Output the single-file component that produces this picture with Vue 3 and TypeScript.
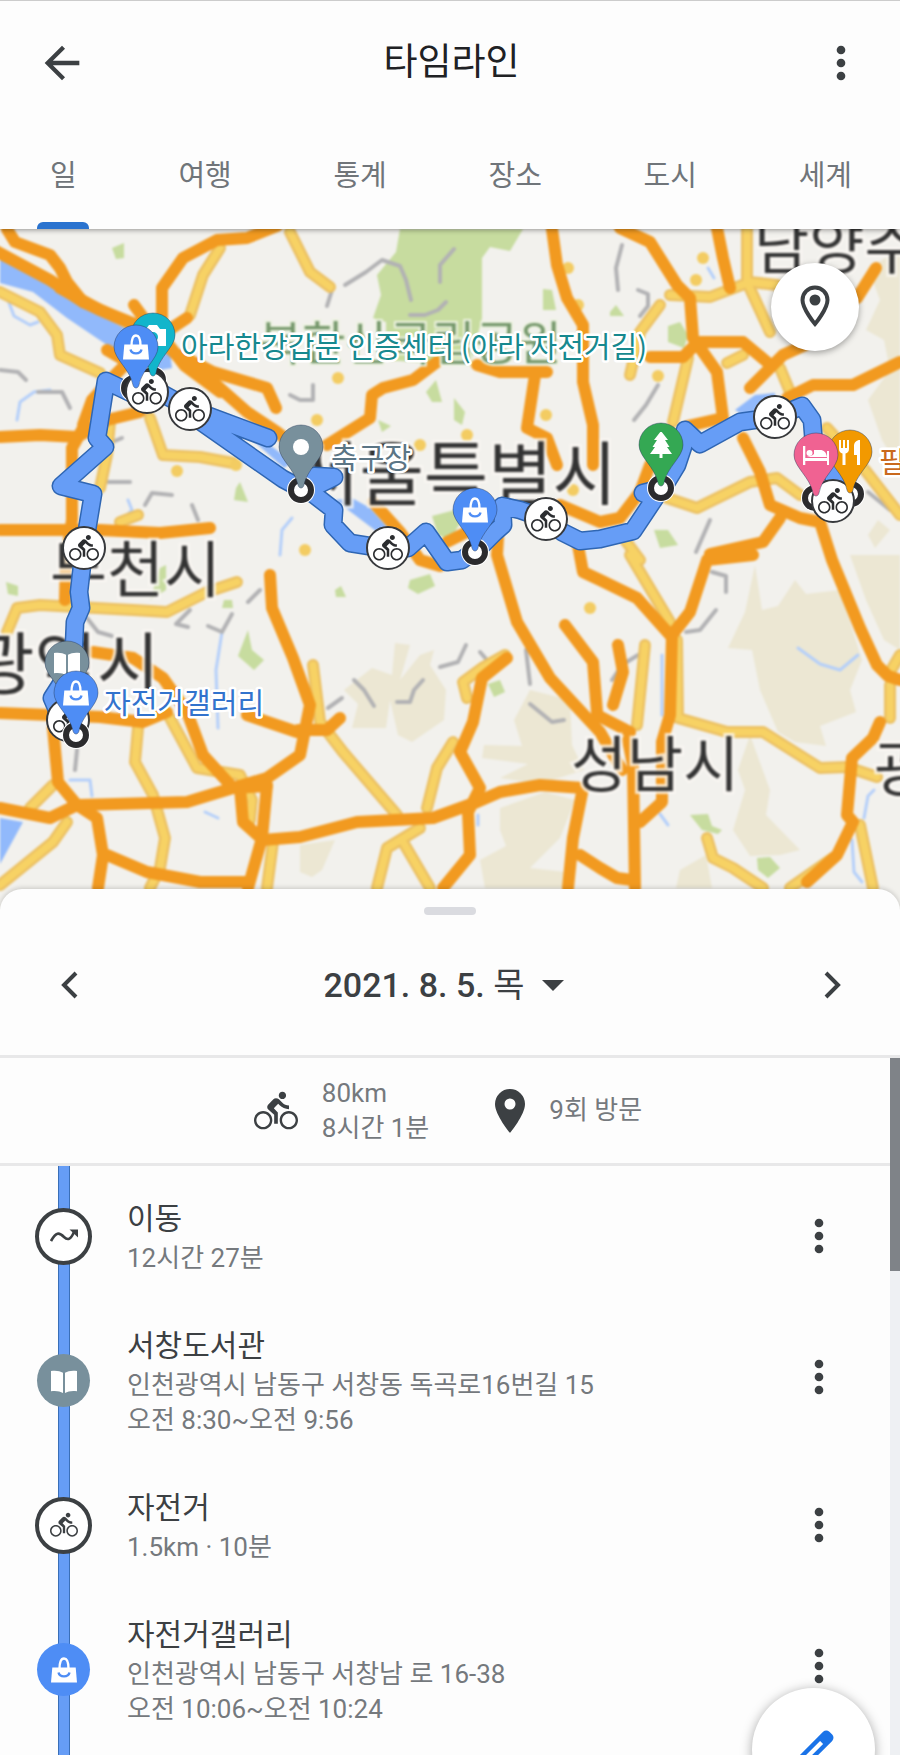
<script setup lang="ts">
import { ref } from 'vue'

type EntryKind = 'move' | 'bike' | 'book' | 'bag'

interface Entry {
  id: number
  kind: EntryKind
  title: string
  lines: string[]
}

interface Label {
  text: string
  x: number
  y: number
  size: number
}

interface Pin {
  icon: string
  x: number
  y: number
  color: string
}

const tabs: string[] = ['일', '여행', '통계', '장소', '도시', '세계']
const activeTab = ref(0)

const entries: Entry[] = [
  { id: 1, kind: 'move', title: '이동', lines: ['12시간 27분'] },
  { id: 2, kind: 'book', title: '서창도서관', lines: ['인천광역시 남동구 서창동 독곡로16번길 15', '오전 8:30~오전 9:56'] },
  { id: 3, kind: 'bike', title: '자전거', lines: ['1.5km · 10분'] },
  { id: 4, kind: 'bag', title: '자전거갤러리', lines: ['인천광역시 남동구 서창남 로 16-38', '오전 10:06~오전 10:24'] },
]

const isPlace = (kind: EntryKind): boolean => kind === 'book' || kind === 'bag'

const hills: string[] = [
  '868,268 900,250 900,470 882,440 868,400 890,370 884,340 866,330 880,300',
  '755,565 762,610 778,606 795,580 806,594 840,590 862,660 850,690 856,712 820,726 826,746 795,742 778,732 760,690 752,650 728,648 745,612',
  '750,735 770,790 766,815 800,850 780,855 750,856 733,830 745,790 738,770',
  '850,555 900,555 900,650 884,640 866,600',
  '395,643 410,645 400,680 420,655 434,650 430,665 446,690 444,720 412,742 398,735 390,700 386,728 352,728 358,704 344,690 372,668 392,675',
  '530,690 570,700 572,745 584,770 540,784 500,778 528,764 482,758 484,745 522,746 514,720',
  '500,808 545,792 575,800 560,838 530,868 566,872 566,888 485,888 480,860 506,846 500,830',
  '300,845 335,840 322,870 312,877 300,872',
  '680,870 706,855 712,888 676,888',
  '878,520 890,530 875,548 868,535',
]

const parks: string[] = [
  '400,229 396,252 377,275 381,295 373,318 386,322 386,360 470,366 482,318 482,258 490,247 510,251 523,229',
  '432,516 455,510 462,520 450,540 438,535',
  '112,248 124,243 124,258 116,259',
  '426,392 436,380 442,402 432,402',
  '454,398 465,412 462,425 454,420',
  '378,420 391,426 382,432',
  '543,289 552,290 556,310 543,310',
  '668,326 680,322 688,335 684,348 668,342',
  '236,488 240,482 248,502 234,500',
  '410,580 430,574 435,586 418,594 408,588',
  '248,630 252,650 264,660 254,670 238,656',
  '488,684 500,680 505,692 494,697',
  '690,815 708,814 712,826 722,830 718,834 702,830',
  '757,858 770,857 780,868 768,878 758,870',
  '654,530 668,530 678,545 660,548',
  '6,582 18,586 18,596 8,594',
  '160,568 166,565 166,590 150,600',
  '224,600 232,600 233,608 222,608',
  '335,590 341,586 346,597 336,597',
  '610,312 616,305 624,316 610,316',
]

const water: string[] = [
  '0,257 113,322 170,352 172,368 160,370 113,349 67,318 33,292 0,283',
  '248,436 266,442 292,462 284,468',
  '335,500 352,498 370,508 388,528 380,534',
  '0,818 23,822 0,864',
  '735,410 755,395 775,393 775,410 745,416',
]

const streams: string[] = [
  '128,500 132,510 120,522 118,535 108,530',
  '17,420 20,402 34,392 50,390',
  '8,300 14,316 30,325 38,322',
  '280,555 282,530 292,518',
  '218,728 216,670 222,632',
  '70,780 90,780 92,796',
  '205,812 218,818',
  '798,648 820,664 840,670 858,655',
  '708,268 714,278',
  '852,840 854,872 862,882',
  '864,818 868,796 874,790',
  '660,814 668,825',
  '662,655 662,715',
  '478,815 478,825',
]

const ridges: string[] = [
  '345,285 366,272 382,260 400,266 406,280 411,300',
  '410,315 425,315 438,310 446,302',
  '440,282 440,265 454,249',
  '327,306 332,290',
  '618,290 616,268 622,245',
  '638,290 648,294 648,306 640,316',
  '634,420 646,405 658,385',
  '0,370 18,372 26,380',
  '38,392 62,392 70,408',
  '290,395 300,400 313,400 313,385',
  '145,505 152,493 172,495',
  '192,505 198,520',
  '87,618 98,632 112,636',
  '190,610 176,624 188,627',
  '208,626 222,632 232,614',
  '248,602 260,590',
  '354,680 364,690 374,706',
  '397,702 410,702 414,690 423,680',
  '440,667 458,662 466,645',
  '480,652 487,660',
  '526,650 530,684',
  '530,704 552,722 564,720',
  '328,708 342,698',
  '686,632 700,630 716,610',
  '712,572 726,576 726,592',
  '612,680 622,665 638,655',
  '75,770 77,750',
  '696,552 710,520',
  '868,492 890,510',
  '105,445 122,438',
  '108,482 130,482',
]

const minorRoads: string[] = [
  '0,292 40,312 57,335 60,355 100,373',
  '190,315 203,275 220,248',
  '150,418 163,455 200,457 233,463',
  '110,422 107,455 100,488',
  '290,232 310,272 330,287',
  '7,632 17,608 40,605 133,610 167,612 207,592 237,582',
  '138,728 135,762 153,795 165,838 160,868 150,888',
  '170,718 197,768 240,775 252,800 250,820',
  '0,885 53,842 67,822',
  '30,808 53,785',
  '273,842 267,888',
  '313,665 320,722 343,752 397,815',
  '403,842 430,888',
  '377,888 387,848 420,828',
  '427,808 437,768 453,742',
  '467,698 463,682 482,668 505,655',
  '630,555 670,622',
  '645,645 637,725',
  '677,640 678,718 727,732 763,732 820,768 847,767 877,777',
  '890,685 890,718',
  '900,655 890,672',
  '860,825 873,888',
  '707,838 713,858 733,868 763,888',
  '790,888 833,858',
  '747,228 747,282 770,332',
  '670,295 710,297 750,282 777,285',
  '630,375 640,332 660,305',
  '688,358 673,422',
  '727,363 743,355',
  '780,368 790,392',
  '667,498 697,508 750,482 777,478 800,495',
  '827,428 865,470 900,515',
  '625,540 640,560',
  '120,522 138,515',
]

const majorRoads: string[] = [
  '-6,250 50,280 83,302 127,322 150,330 180,358 213,382 247,412 277,432 302,452',
  '7,229 15,242 50,255 60,268 67,282 83,302',
  '60,288 100,310 135,324 165,340 185,366 220,392',
  '162,318 162,288 183,258 217,240 247,238 277,226',
  '180,355 213,372 267,388 276,408',
  '0,437 40,435 77,437 107,420 140,412',
  '83,425 92,400 115,375 140,350',
  '82,430 72,448 72,520 66,560 65,600',
  '0,530 100,530 160,533 210,528',
  '107,350 133,365 150,370',
  '134,305 145,320',
  '187,318 166,332',
  '327,445 370,418 372,395 383,388 413,380 437,362',
  '477,365 500,372 547,372',
  '535,375 527,428 547,438 557,465',
  '552,229 557,265 567,298 583,325 583,382 593,425 593,465',
  '373,502 400,532 420,560 440,566',
  '447,542 467,532',
  '560,505 600,522 620,518 640,492 650,465',
  '498,538 497,555 517,622 550,678 600,732 622,770',
  '577,540 583,572 600,580 637,598 670,635',
  '753,555 707,560 690,612 672,635 670,715 662,742 662,802 640,822',
  '628,740 633,765 635,888',
  '565,625 593,662 597,712',
  '618,645 623,672 613,705',
  '597,715 630,732',
  '620,228 650,242 677,285 690,298 693,338 717,372 723,418 688,426',
  '743,438 760,472 770,505 800,518 820,522 832,560 860,628 877,665 888,676 900,680',
  '780,518 763,542 710,554',
  '717,228 723,258 730,288',
  '700,342 743,342 767,362',
  '750,388 783,355 805,345',
  '650,357 683,357 695,345',
  '876,268 857,298',
  '787,398 813,385 853,385 900,362',
  '270,575 272,608 293,658 310,705 300,755 267,778 233,788 187,802 80,805',
  '93,652 133,658 163,678 187,712 203,755 233,788 267,786',
  '0,713 100,717 143,722 167,712',
  '53,728 58,782 77,805 97,818 103,855 98,888',
  '0,808 50,818 77,805',
  '107,855 147,872 200,882 247,882',
  '240,788 243,822 263,840 300,837 357,822 433,818 477,802 500,792 540,785 583,788',
  '267,785 262,838 248,888',
  '247,715 297,732',
  '507,658 482,678 473,722 460,752 480,788 468,812 470,855 443,888',
  '583,788 573,838 568,888',
  '580,855 600,868 617,878 632,880',
  '298,730 327,730 340,718',
  '880,722 873,738 852,758 847,815 853,822 837,855 807,882',
]

const roadDots: number[][] = [
  [338, 378], [317, 420], [420, 445], [467, 435], [546, 415], [568, 268], [578, 305],
  [177, 471], [236, 465], [703, 258], [696, 280], [658, 376], [305, 550], [590, 608], [573, 490],
]

const cityLabels: Label[] = [
  { text: '서울특별시', x: 295, y: 500, size: 70 },
  { text: '부천시', x: 50, y: 593, size: 62 },
  { text: '광역시', x: -28, y: 689, size: 68 },
  { text: '성남시', x: 571, y: 787, size: 61 },
  { text: '광', x: 874, y: 791, size: 60 },
  { text: '남양주', x: 754, y: 269, size: 60 },
]

const routes: string[] = [
  '147,398 131,393 106,381 97,438 105,447 61,486 93,494 84,548 79,592 81,608 75,622 74,645 70,670 52,698 58,712',
  '147,385 190,409 268,438 M190,414 283,479 300,488 314,476 334,477 308,490 334,510 333,525 350,543 388,549 408,548 426,532 447,562 462,560 482,545 495,532 503,525 502,506 520,510 546,519 562,532 580,541 600,539 633,531 655,498 643,493 663,488 677,465 683,447 685,430 700,444 740,422 776,417 802,406 812,420 814,445 838,484',
]

const toPath = (points: string): string => 'M' + points

const rings: number[][] = [
  [134, 388], [153, 380], [301, 490], [475, 552], [661, 488], [815, 498], [851, 494],
]

const bikeStops: number[][] = [
  [147, 392], [190, 409], [84, 548], [388, 548], [546, 519], [775, 417], [833, 501], [68, 720],
]

const pins: Pin[] = [
  { icon: 'i-camera', x: 153, y: 335, color: '#12b5cb' },
  { icon: 'i-bag', x: 136, y: 347, color: '#4e8df5' },
  { icon: 'i-dot', x: 301, y: 447, color: '#78909c' },
  { icon: 'i-bag', x: 475, y: 510, color: '#4e8df5' },
  { icon: 'i-tree', x: 661, y: 445, color: '#34a853' },
  { icon: 'i-fork', x: 850, y: 452, color: '#f29900' },
  { icon: 'i-bed', x: 816, y: 455, color: '#f06292' },
  { icon: 'i-book', x: 67, y: 663, color: '#78909c' },
  { icon: 'i-bag', x: 76, y: 693, color: '#4e8df5' },
]
</script>

<template>
  <div class="screen">
    <svg class="sprite" aria-hidden="true">
      <symbol id="i-bike" viewBox="0 0 24 24">
        <path d="M15.5 5.5c1.1 0 2-.9 2-2s-.9-2-2-2-2 .9-2 2 .9 2 2 2zM5 12c-2.8 0-5 2.2-5 5s2.2 5 5 5 5-2.2 5-5-2.2-5-5-5zm0 8.700c-2 0-3.700-1.700-3.700-3.700s1.700-3.700 3.700-3.700 3.700 1.700 3.700 3.700-1.700 3.700-3.700 3.700zm5.800-10.200l2.400-2.400.8.8c1.300 1.300 3 2.100 5.100 2.100V9c-1.500 0-2.700-.6-3.600-1.500l-1.900-1.900c-.5-.4-1-.6-1.600-.6s-1.100.2-1.400.6L7.800 8.400c-.4.4-.6.9-.6 1.400 0 .6.2 1.100.6 1.400L11 14v5h2v-6.200l-2.200-2.300zM19 12c-2.800 0-5 2.200-5 5s2.200 5 5 5 5-2.200 5-5-2.200-5-5-5zm0 8.700c-2 0-3.700-1.700-3.700-3.700s1.700-3.700 3.700-3.700 3.700 1.700 3.700 3.700-1.700 3.700-3.700 3.700z" fill="currentColor" />
      </symbol>
      <symbol id="i-bag" viewBox="0 0 26 26">
        <path d="M1.300 10.500h23.400L26 25.500H0z" fill="#fff" />
        <path d="M8.500 12C8.500 5 10 1.500 13 1.500s4.500 3.500 4.500 10.500" fill="none" stroke="#fff" stroke-width="2.400" />
        <path d="M7.500 15.500a5.600 4.800 0 0 0 11 0" fill="none" stroke="#4e8df5" stroke-width="2.400" />
      </symbol>
      <symbol id="i-book" viewBox="0 0 26 26">
        <path d="M0 3c5-.8 9 0 12 1.800V25c-3-1.800-7-2.600-12-1.800zM26 3c-5-.8-9 0-12 1.800V25c3-1.800 7-2.600 12-1.800z" fill="#fff" />
      </symbol>
      <symbol id="i-dot" viewBox="0 0 26 26"><circle cx="13" cy="13" r="8" fill="#fff" /></symbol>
      <symbol id="i-camera" viewBox="0 0 26 26">
        <path d="M0 7h6l3-4h8l3 4h6v17H0z" fill="#fff" />
        <circle cx="13" cy="15" r="5" fill="#12b5cb" />
      </symbol>
      <symbol id="i-tree" viewBox="0 0 26 26">
        <path d="M13 -1L6 8h3l-4.500 7H7l-5 7h9.500v5h3v-5H24l-5-7h2.500L17 8h3z" fill="#fff" />
      </symbol>
      <symbol id="i-fork" viewBox="0 0 26 26">
        <path d="M2 1h2v8h2V1h2v8h2V1h2v9c0 2.500-1.500 4-3.500 4.500V26h-3V14.500C3.500 14 2 12.500 2 10zM23 1v25h-3V16h-3V7c0-3.500 2.500-6 6-6z" fill="#fff" />
      </symbol>
      <symbol id="i-bed" viewBox="0 0 26 26">
        <path d="M0 4h2.300v12H24V9h2v14h-2v-4H2.300v4H0z" fill="#fff" />
        <circle cx="6.500" cy="11" r="3" fill="#fff" />
        <path d="M11 8h6c4 0 6 2 7 7H3.500c3-.5 5.500-1 7.500-3z" fill="#fff" />
      </symbol>
      <symbol id="i-move" viewBox="0 0 28 16">
        <path d="M1 13C6 4 9 4 14 9c4 4 7 2 10-5" fill="none" stroke="currentColor" stroke-width="2.600" />
        <path d="M19.500 1.500H28V9.500z" fill="currentColor" />
      </symbol>
      <symbol id="i-more" viewBox="0 0 24 24">
        <g fill="currentColor"><circle cx="12" cy="6" r="2" /><circle cx="12" cy="12" r="2" /><circle cx="12" cy="18" r="2" /></g>
      </symbol>
    </svg>

    <header class="top">
      <div class="bar">
        <button class="icon-btn" type="button" aria-label="뒤로">
          <svg class="i52" viewBox="0 0 24 24"><path d="M20 11H7.800l5.600-5.600L12 4l-8 8 8 8 1.400-1.400L7.800 13H20z" fill="currentColor" /></svg>
        </button>
        <h1>타임라인</h1>
        <button class="icon-btn" type="button" aria-label="더보기">
          <svg class="i52"><use href="#i-more" /></svg>
        </button>
      </div>
      <nav class="tabs">
        <button
          v-for="(tab, i) in tabs"
          :key="tab"
          type="button"
          class="tab"
          :class="{ active: i === activeTab }"
          @click="activeTab = i"
        >{{ tab }}</button>
      </nav>
    </header>

    <section class="map">
      <svg class="canvas" viewBox="0 229 900 680" preserveAspectRatio="xMidYMin slice">
        <g class="tiles">
          <rect x="-10" y="219" width="920" height="700" fill="#f2f1ed" />
          <polygon v-for="(p, i) in hills" :key="'h' + i" :points="p" fill="#ece7d3" />
          <polygon v-for="(p, i) in parks" :key="'p' + i" :points="p" fill="#c7dc9f" />
          <polygon v-for="(p, i) in water" :key="'w' + i" :points="p" fill="#91b9fb" />
          <polyline v-for="(p, i) in streams" :key="'s' + i" :points="p" class="stream" />
          <polyline v-for="(p, i) in ridges" :key="'r' + i" :points="p" class="ridge" />
          <polyline v-for="(p, i) in minorRoads" :key="'c' + i" :points="p" class="minor-casing" />
          <polyline v-for="(p, i) in minorRoads" :key="'m' + i" :points="p" class="minor" />
          <circle v-for="(d, i) in roadDots" :key="'d' + i" :cx="d[0]" :cy="d[1]" r="6" fill="#f3cc62" />
          <polyline v-for="(p, i) in majorRoads" :key="'o' + i" :points="p" class="major" />
          <text class="park-name" x="259" y="360" font-size="47">북한산국립공원</text>
          <text v-for="l in cityLabels" :key="l.text" class="city" :x="l.x" :y="l.y" :font-size="l.size">{{ l.text }}</text>
        </g>

        <path v-for="(p, i) in routes" :key="'a' + i" :d="toPath(p)" class="route-edge" />
        <path v-for="(p, i) in routes" :key="'b' + i" :d="toPath(p)" class="route" />

        <g v-for="(r, i) in rings" :key="'g' + i">
          <circle :cx="r[0]" :cy="r[1]" r="14" fill="#fff" />
          <circle :cx="r[0]" :cy="r[1]" r="10" class="ring" />
        </g>
        <g v-for="(b, i) in bikeStops" :key="'k' + i" class="stop">
          <circle :cx="b[0]" :cy="b[1]" r="21" />
          <use href="#i-bike" :x="b[0] - 15" :y="b[1] - 15" width="30" height="30" />
        </g>
        <circle cx="76" cy="735" r="14" fill="#fff" />
        <circle cx="76" cy="735" r="10" class="ring" />

        <g v-for="(p, i) in pins" :key="'n' + i" :transform="`translate(${p.x} ${p.y})`">
          <path d="M0 -22a22 22 0 0 1 22 22c0 12 -16 22 -19 38c-1 4 -5 4 -6 0c-3 -16 -19 -26 -19 -38a22 22 0 0 1 22 -22z" :fill="p.color" class="pin" />
          <use :href="'#' + p.icon" x="-13" y="-13" width="26" height="26" />
        </g>

        <text class="poi teal" x="181" y="358">아라한강갑문 인증센터 (아라 자전거길)</text>
        <text class="poi slate" x="331" y="469">축구장</text>
        <text class="poi blue" x="104" y="714">자전거갤러리</text>
        <text class="poi rust" x="879" y="473">필</text>
      </svg>
      <button class="locate" type="button" aria-label="위치">
        <svg width="30" height="44" viewBox="0 0 30 44">
          <path d="M15 2.500A12.500 12.500 0 0 0 2.500 15C2.500 24 15 39 15 39s12.500-15 12.500-24A12.500 12.500 0 0 0 15 2.500z" fill="none" stroke="#3c4043" stroke-width="4" />
          <circle cx="15" cy="15" r="5.500" fill="#3c4043" />
        </svg>
      </button>
    </section>

    <main class="sheet">
      <div class="handle"></div>
      <div class="date-row">
        <button class="icon-btn" type="button" aria-label="이전 날짜">
          <svg width="18" height="28" viewBox="0 0 18 28"><path d="M16 2L4 14l12 12" fill="none" stroke="currentColor" stroke-width="4" /></svg>
        </button>
        <button class="date" type="button">
          <span>2021. 8. 5. <span class="weekday">목</span></span>
          <svg width="22" height="11" viewBox="0 0 22 11"><path d="M0 0h22L11 11z" fill="currentColor" /></svg>
        </button>
        <button class="icon-btn" type="button" aria-label="다음 날짜">
          <svg width="18" height="28" viewBox="0 0 18 28"><path d="M2 2l12 12L2 26" fill="none" stroke="currentColor" stroke-width="4" /></svg>
        </button>
      </div>

      <div class="scroll">
        <div class="content">
          <div class="summary">
            <div class="stat">
              <svg width="44" height="44"><use href="#i-bike" /></svg>
              <p>80km<br />8시간 1분</p>
            </div>
            <div class="stat">
              <svg width="30" height="44" viewBox="0 0 30 44"><path fill-rule="evenodd" d="M15 0A15 15 0 0 0 0 15c0 11 15 29 15 29s15-18 15-29A15 15 0 0 0 15 0zm0 20.500a5.500 5.500 0 1 1 0-11 5.500 5.500 0 0 1 0 11z" fill="currentColor" /></svg>
              <p>9회 방문</p>
            </div>
          </div>
          <ul class="list">
            <li v-for="e in entries" :key="e.id" class="entry">
              <div class="rail">
                <span class="node" :class="[e.kind, { place: isPlace(e.kind) }]">
                  <svg class="glyph"><use :href="'#i-' + e.kind" /></svg>
                </span>
              </div>
              <div class="text">
                <h2>{{ e.title }}</h2>
                <p v-for="line in e.lines" :key="line">{{ line }}</p>
              </div>
              <button class="icon-btn" :class="{ raised: isPlace(e.kind) }" type="button" :aria-label="e.title + ' 더보기'">
                <svg class="i52"><use href="#i-more" /></svg>
              </button>
            </li>
          </ul>
        </div>
        <div class="track"><div class="thumb"></div></div>
      </div>
    </main>

    <button class="fab" type="button" aria-label="수정">
      <svg class="i52" viewBox="0 0 24 24"><path fill-rule="evenodd" d="M20.400 4.900l-1.300-1.300c-.8-.8-2.100-.8-2.900 0L3 16.800V21h4.200L20.400 7.800c.8-.8.8-2.100 0-2.900zM6.400 19H5v-1.400l9.800-9.800 1.400 1.400z" fill="#1a73e8" /></svg>
    </button>
  </div>
</template>

<style>
body {
  margin: 0;
  background: #fff;
}
</style>

<style scoped>
.screen {
  position: relative;
  display: flex;
  flex-direction: column;
  height: 100vh;
  overflow: hidden;
  background: #fdfdfd;
  color: #3c4043;
  font-family: Roboto, "Noto Sans CJK KR", sans-serif;
}

.sprite {
  position: absolute;
  width: 0;
  height: 0;
}

h1,
h2,
p,
ul {
  margin: 0;
  padding: 0;
  font-weight: 400;
}

button {
  padding: 0;
  border: 0;
  background: none;
  color: inherit;
  font: inherit;
  cursor: pointer;
}

svg {
  display: block;
}

.i52 {
  width: 52px;
  height: 52px;
}

.icon-btn {
  display: flex;
  flex: none;
}

.top {
  position: relative;
  z-index: 1;
  flex: none;
  border-top: 1px solid #ccc;
  background: #fdfdfd;
  box-shadow: 0 1px 5px rgba(0, 0, 0, 0.4);
}

.bar {
  display: flex;
  align-items: center;
  justify-content: space-between;
  height: 123px;
  padding: 0 33px 0 36px;
}

h1 {
  color: #202124;
  font-size: 37px;
  line-height: 48px;
}

.tabs {
  display: flex;
  justify-content: space-between;
  height: 105px;
  padding: 0 48px 0 50px;
}

.tab {
  position: relative;
  padding-bottom: 8px;
  color: #70757a;
  font-size: 29px;
}

.tab.active::after {
  content: "";
  position: absolute;
  bottom: 0;
  left: 50%;
  width: 52px;
  height: 7px;
  margin-left: -26px;
  border-radius: 6px 6px 0 0;
  background: #2a73cf;
}

.map {
  position: relative;
  flex: none;
  aspect-ratio: 90 / 68;
  overflow: hidden;
}

.canvas {
  width: 100%;
  height: 100%;
  font-family: "Noto Sans CJK KR", sans-serif;
}

.tiles {
  filter: blur(1px);
}

.stream,
.ridge,
.minor,
.minor-casing,
.major {
  fill: none;
  stroke-linejoin: round;
  stroke-linecap: round;
}

.stream {
  stroke: #b4cffa;
  stroke-width: 3px;
}

.ridge {
  stroke: #b2b2b4;
  stroke-width: 4px;
}

.minor-casing {
  stroke: #ecc163;
  stroke-width: 12px;
}

.minor {
  stroke: #f7d264;
  stroke-width: 7px;
}

.major {
  stroke: #f29a20;
  stroke-width: 12px;
}

.park-name {
  fill: #74976a;
  stroke: #eef3e2;
  stroke-width: 4px;
  paint-order: stroke;
}

.city {
  fill: #333;
  stroke: rgba(250, 248, 242, 0.8);
  stroke-width: 6px;
  paint-order: stroke;
}

.route-edge,
.route {
  fill: none;
  stroke-linejoin: round;
  stroke-linecap: round;
}

.route-edge {
  stroke: #2f66b3;
  stroke-width: 19px;
}

.route {
  stroke: #669df6;
  stroke-width: 16px;
}

.ring {
  fill: #fff;
  stroke: #2b2b2d;
  stroke-width: 6px;
}

.stop {
  color: #2b2d30;
}

.stop circle {
  fill: #fff;
  stroke: #37393c;
  stroke-width: 2px;
}

.pin {
  stroke: rgba(40, 60, 90, 0.45);
  stroke-width: 1px;
}

.poi {
  font-size: 29px;
  stroke: #fff;
  stroke-width: 5px;
  stroke-linejoin: round;
  paint-order: stroke;
}

.teal {
  fill: #17898f;
}

.slate {
  fill: #5b7585;
}

.blue {
  fill: #3273cd;
}

.rust {
  fill: #c9691d;
}

.locate {
  position: absolute;
  top: 34px;
  right: 41px;
  display: flex;
  align-items: center;
  justify-content: center;
  width: 88px;
  height: 88px;
  border-radius: 50%;
  background: #fff;
  box-shadow: 0 2px 6px rgba(0, 0, 0, 0.35);
}

.sheet {
  position: relative;
  display: flex;
  flex: 1;
  flex-direction: column;
  min-height: 0;
  margin-top: -20px;
  border-radius: 22px 22px 0 0;
  background: #fdfdfd;
  box-shadow: 0 -1px 5px rgba(0, 0, 0, 0.18);
}

.handle {
  flex: none;
  width: 52px;
  height: 8px;
  margin: 18px auto 0;
  border-radius: 4px;
  background: #dadbe0;
}

.date-row {
  display: flex;
  flex: none;
  align-items: center;
  justify-content: space-between;
  height: 140px;
  padding: 0 58px 0 60px;
  border-bottom: 3px solid #e8e8e9;
}

.date {
  display: flex;
  align-items: center;
  gap: 18px;
  margin-right: 14px;
  font-size: 34px;
  font-weight: 500;
  line-height: 44px;
}

.weekday {
  font-weight: 400;
}

.scroll {
  display: flex;
  flex: 1;
  min-height: 0;
}

.content {
  display: flex;
  flex: 1;
  flex-direction: column;
  min-width: 0;
}

.summary {
  display: flex;
  flex: none;
  align-items: center;
  justify-content: center;
  gap: 66px;
  height: 105px;
  padding-left: 6px;
  border-bottom: 3px solid #e8e8e9;
}

.stat {
  display: flex;
  align-items: center;
  gap: 24px;
}

p {
  color: #75797d;
  font-size: 26px;
  line-height: 35px;
}

.list {
  position: relative;
  flex: 1;
  padding-top: 6px;
  list-style: none;
}

.list::before {
  content: "";
  position: absolute;
  top: 0;
  bottom: 0;
  left: 58px;
  box-sizing: border-box;
  width: 12px;
  border: solid #3a6fb8;
  border-width: 0 1px;
  background: #669df6;
}

.entry {
  position: relative;
  display: flex;
  align-items: center;
  padding: 24px 45px 23px 0;
}

.raised {
  padding-bottom: 8px;
}

.rail {
  display: flex;
  flex: none;
  justify-content: center;
  width: 127px;
}

.node {
  display: flex;
  align-items: center;
  justify-content: center;
  box-sizing: border-box;
  width: 57px;
  height: 57px;
  border: 4px solid #3c4043;
  border-radius: 50%;
  background: #fff;
}

.node.place {
  width: 53px;
  height: 53px;
  border: 0;
}

.node.book {
  background: #78909c;
}

.node.bag {
  background: #4e8df5;
}

.glyph {
  width: 28px;
  height: 28px;
}

.place .glyph {
  width: 26px;
  height: 26px;
}

.text {
  flex: 1;
  min-width: 0;
}

h2 {
  font-size: 30px;
  line-height: 45px;
}

.track {
  flex: none;
  width: 10px;
  background: #eef0f3;
}

.thumb {
  height: 213px;
  background: #7f8388;
}

.fab {
  position: fixed;
  right: 25px;
  bottom: -56px;
  display: flex;
  align-items: center;
  justify-content: center;
  width: 123px;
  height: 123px;
  border-radius: 50%;
  background: #fff;
  box-shadow: 0 2px 12px rgba(0, 0, 0, 0.35);
}
</style>
